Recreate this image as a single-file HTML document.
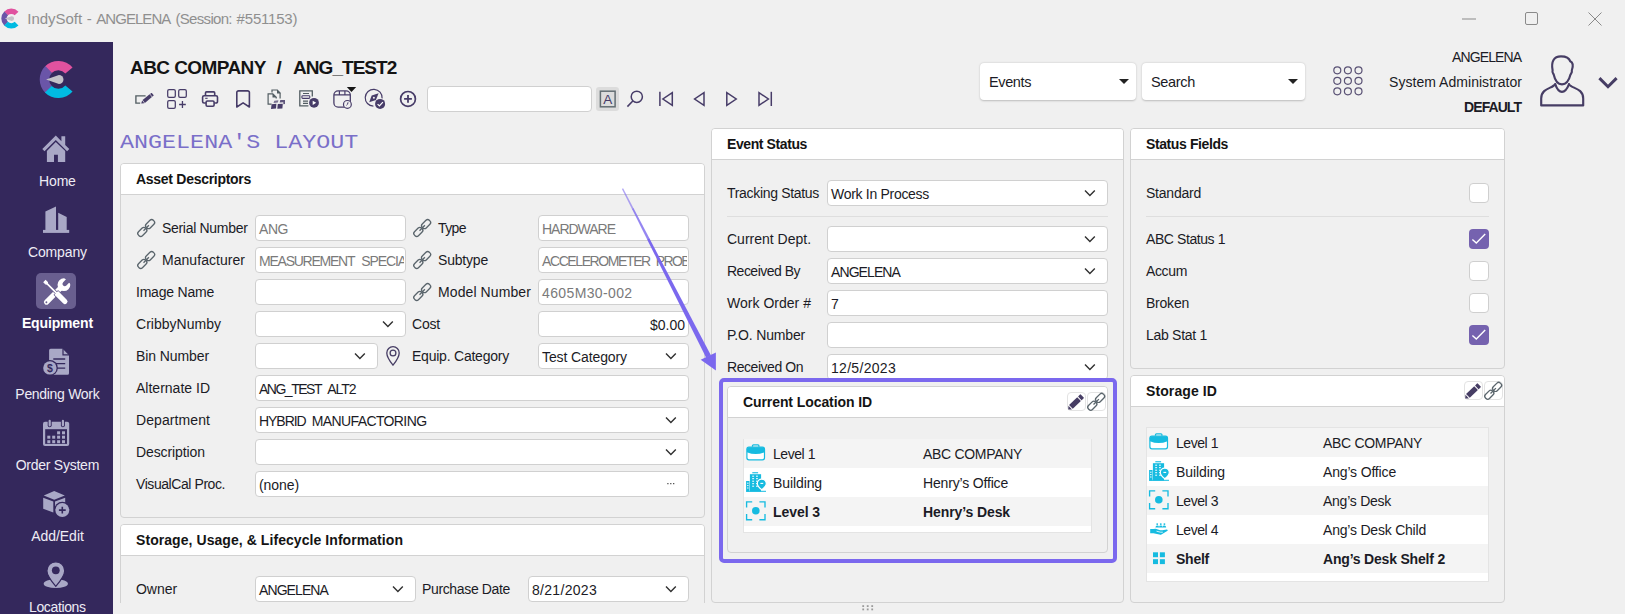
<!DOCTYPE html>
<html><head><meta charset="utf-8"><title>IndySoft</title>
<style>
html,body{margin:0;padding:0}
html{width:1625px;height:614px;overflow:hidden}
body{width:1625px;height:614px;overflow:hidden;background:#f0f0f0;position:relative;font-family:"Liberation Sans",sans-serif;font-size:14px;color:#1b1b25}
div,svg{position:absolute;box-sizing:border-box}
.t{white-space:pre;line-height:20px;height:20px}
.i{overflow:visible}
.m{font-family:"Liberation Mono",monospace}
.side{background:#34285c}
.pn{border:1px solid #d2d2d2;border-radius:4px;background:#f0f0f0}
.ph{background:#fff;border-bottom:1px solid #d2d2d2;border-radius:3px 3px 0 0}
.in{background:#fff;border:1px solid #d0d0d0;border-radius:4px}
.dd{background:#fff;border-radius:4px;box-shadow:0 0.5px 2px rgba(0,0,0,.22)}
.cb{background:#fff;border:1px solid #cfcfcf;border-radius:4px}
.cbc{background:#7562af;border-radius:4px}
.sep{background:#dedede}
.r0{background:#f4f4f4}
.r1{background:#fff}
.tb{border:1px solid #e4e4e4;background:#fff}
.sb{background:#fff;border:1px solid #e3e3e3;border-radius:4px}
</style></head><body>
<div class="t" style="left:27.30px;top:8.80px;font-size:15px;color:#8f8f8f;letter-spacing:-0.041px;">IndySoft</div>
<div class="t" style="left:86.70px;top:8.80px;font-size:15px;color:#8f8f8f;">-</div>
<div class="t" style="left:96.30px;top:8.80px;font-size:15px;color:#8f8f8f;letter-spacing:-0.962px;">ANGELENA</div>
<div class="t" style="left:175.50px;top:8.80px;font-size:15px;color:#8f8f8f;letter-spacing:-0.692px;">(Session:</div>
<div class="t" style="left:236.60px;top:8.80px;font-size:15px;color:#8f8f8f;letter-spacing:-0.196px;">#551153)</div>
<svg class="i" style="left:1462px;top:18px;" width="14" height="2" viewBox="0 0 14 2"><path d="M0 1H14" stroke="#8a8a8a" stroke-width="1"/></svg>
<svg class="i" style="left:1525px;top:12px;" width="13" height="13" viewBox="0 0 13 13"><rect x="0.5" y="0.5" width="12" height="12" rx="1.5" fill="none" stroke="#8a8a8a"/></svg>
<svg class="i" style="left:1588px;top:12px;" width="14" height="14" viewBox="0 0 14 14"><path d="M0.5 0.5L13.5 13.5M13.5 0.5L0.5 13.5" stroke="#8a8a8a" stroke-width="1"/></svg>
<div class="side" style="left:0px;top:42px;width:113px;height:572px;"></div>
<div class="t" style="left:39.11px;top:171.00px;font-size:14px;color:#eeecf5;letter-spacing:-0.186px;">Home</div>
<div class="t" style="left:27.93px;top:242.00px;font-size:14px;color:#eeecf5;letter-spacing:-0.130px;">Company</div>
<div class="t" style="left:21.93px;top:313.00px;font-size:14px;font-weight:bold;color:#ffffff;letter-spacing:-0.148px;">Equipment</div>
<div class="t" style="left:15.35px;top:384.00px;font-size:14px;color:#eeecf5;letter-spacing:-0.306px;">Pending Work</div>
<div class="t" style="left:15.68px;top:455.00px;font-size:14px;color:#eeecf5;letter-spacing:-0.246px;">Order System</div>
<div class="t" style="left:31.14px;top:526.00px;font-size:14px;color:#eeecf5;letter-spacing:-0.028px;">Add/Edit</div>
<div class="t" style="left:29.02px;top:597.00px;font-size:14px;color:#eeecf5;letter-spacing:-0.370px;height:17px;overflow:hidden;">Locations</div>
<div class="t" style="left:130.00px;top:57.80px;font-size:19px;font-weight:bold;color:#141414;letter-spacing:-0.577px;">ABC COMPANY</div>
<div class="t" style="left:276.40px;top:57.80px;font-size:19px;font-weight:bold;color:#141414;">/</div>
<div class="t" style="left:293.10px;top:57.80px;font-size:19px;font-weight:bold;color:#141414;letter-spacing:-0.968px;">ANG_TEST2</div>
<div class="in" style="left:427px;top:86px;width:165px;height:26px;"></div>
<div class="t m" style="left:120.30px;top:133.00px;font-size:20px;color:#7a6fc9;transform:scaleX(1.1683);transform-origin:0 0;">ANGELENA'S LAYOUT</div>
<div class="dd" style="left:980px;top:63px;width:156px;height:37px;"></div>
<div class="t" style="left:989.00px;top:71.50px;font-size:14.5px;letter-spacing:-0.388px;">Events</div>
<div class="dd" style="left:1142px;top:63px;width:163px;height:37px;"></div>
<div class="t" style="left:1151.00px;top:71.50px;font-size:14.5px;letter-spacing:-0.323px;">Search</div>
<svg class="i" style="left:1119px;top:79px;" width="10" height="5" viewBox="0 0 10 5"><path d="M0 0H10L5 5Z" fill="#222"/></svg>
<svg class="i" style="left:1288px;top:79px;" width="10" height="5" viewBox="0 0 10 5"><path d="M0 0H10L5 5Z" fill="#222"/></svg>
<div class="t" style="left:1452.09px;top:47.00px;font-size:14px;letter-spacing:-0.906px;">ANGELENA</div>
<div class="t" style="left:1389.04px;top:72.00px;font-size:14px;letter-spacing:0.037px;">System Administrator</div>
<div class="t" style="left:1464.07px;top:97.00px;font-size:14px;font-weight:bold;letter-spacing:-0.930px;">DEFAULT</div>
<div class="pn" style="left:120px;top:163px;width:585px;height:355px;"></div>
<div class="ph" style="left:121px;top:164px;width:583px;height:31px;"></div>
<div class="t" style="left:136.00px;top:169.00px;font-size:14px;font-weight:bold;color:#141414;letter-spacing:-0.284px;">Asset Descriptors</div>
<div class="t" style="left:162.00px;top:217.80px;font-size:14px;letter-spacing:-0.305px;">Serial Number</div>
<div class="in" style="left:255px;top:215px;width:151px;height:26px;"></div>
<div class="t" style="left:259.00px;top:218.80px;font-size:14px;color:#7a7a7a;letter-spacing:-0.446px;">ANG</div>
<div class="t" style="left:162.00px;top:249.80px;font-size:14px;letter-spacing:0.044px;">Manufacturer</div>
<div class="in" style="left:255px;top:247px;width:151px;height:26px;"></div>
<div class="t" style="left:259.00px;top:250.80px;font-size:14px;color:#7a7a7a;letter-spacing:-1.236px;">MEASUREMENT</div>
<div class="t" style="left:361.20px;top:250.80px;font-size:14px;color:#7a7a7a;letter-spacing:-1.091px;width:43.2px;overflow:hidden;">SPECIAL</div>
<div class="t" style="left:136.00px;top:281.80px;font-size:14px;letter-spacing:-0.214px;">Image Name</div>
<div class="in" style="left:255px;top:279px;width:151px;height:26px;"></div>
<div class="t" style="left:136.00px;top:313.80px;font-size:14px;letter-spacing:0.019px;">CribbyNumby</div>
<div class="in" style="left:255px;top:311px;width:151px;height:26px;"></div>
<div class="t" style="left:136.00px;top:345.80px;font-size:14px;letter-spacing:-0.091px;">Bin Number</div>
<div class="in" style="left:255px;top:343px;width:123px;height:26px;"></div>
<div class="t" style="left:136.00px;top:377.80px;font-size:14px;letter-spacing:0.007px;">Alternate ID</div>
<div class="in" style="left:255px;top:375px;width:434px;height:26px;"></div>
<div class="t" style="left:259.00px;top:378.80px;font-size:14px;letter-spacing:-1.488px;">ANG_TEST</div>
<div class="t" style="left:327.20px;top:378.80px;font-size:14px;letter-spacing:-1.005px;">ALT2</div>
<div class="t" style="left:136.00px;top:409.80px;font-size:14px;letter-spacing:0.086px;">Department</div>
<div class="in" style="left:255px;top:407px;width:434px;height:26px;"></div>
<div class="t" style="left:259.00px;top:410.80px;font-size:14px;letter-spacing:-1.050px;">HYBRID</div>
<div class="t" style="left:311.80px;top:410.80px;font-size:14px;letter-spacing:-0.618px;">MANUFACTORING</div>
<div class="t" style="left:136.00px;top:441.80px;font-size:14px;letter-spacing:-0.093px;">Description</div>
<div class="in" style="left:255px;top:439px;width:434px;height:26px;"></div>
<div class="t" style="left:136.00px;top:473.80px;font-size:14px;letter-spacing:-0.430px;">VisualCal Proc.</div>
<div class="in" style="left:255px;top:471px;width:434px;height:26px;"></div>
<div class="t" style="left:259.00px;top:474.80px;font-size:14px;letter-spacing:-0.077px;">(none)</div>
<div class="t" style="left:438.00px;top:217.80px;font-size:14px;letter-spacing:-0.587px;">Type</div>
<div class="in" style="left:538px;top:215px;width:151px;height:26px;"></div>
<div class="t" style="left:542.00px;top:218.80px;font-size:14px;color:#7a7a7a;letter-spacing:-1.019px;">HARDWARE</div>
<div class="t" style="left:438.00px;top:249.80px;font-size:14px;letter-spacing:-0.196px;">Subtype</div>
<div class="in" style="left:538px;top:247px;width:151px;height:26px;"></div>
<div class="t" style="left:542.00px;top:250.80px;font-size:14px;color:#7a7a7a;letter-spacing:-1.402px;">ACCELEROMETER</div>
<div class="t" style="left:655.80px;top:250.80px;font-size:14px;color:#7a7a7a;letter-spacing:-1.603px;width:31.4px;overflow:hidden;">PROBE</div>
<div class="t" style="left:438.00px;top:281.80px;font-size:14px;letter-spacing:0.099px;">Model Number</div>
<div class="in" style="left:538px;top:279px;width:151px;height:26px;"></div>
<div class="t" style="left:542.00px;top:282.80px;font-size:14px;color:#7a7a7a;letter-spacing:0.374px;">4605M30-002</div>
<div class="t" style="left:412.00px;top:313.80px;font-size:14px;letter-spacing:-0.196px;">Cost</div>
<div class="in" style="left:538px;top:311px;width:151px;height:26px;"></div>
<div class="t" style="left:649.99px;top:314.80px;font-size:14px;letter-spacing:-0.006px;">$0.00</div>
<div class="t" style="left:412.00px;top:345.80px;font-size:14px;letter-spacing:-0.226px;">Equip. Category</div>
<div class="in" style="left:538px;top:343px;width:151px;height:26px;"></div>
<div class="t" style="left:542.00px;top:346.80px;font-size:14px;letter-spacing:-0.105px;">Test Category</div>
<div class="pn" style="left:120px;top:524px;width:585px;height:86px;"></div>
<div class="ph" style="left:121px;top:525px;width:583px;height:31px;"></div>
<div class="t" style="left:136.00px;top:530.00px;font-size:14px;font-weight:bold;color:#141414;letter-spacing:0.064px;">Storage, Usage, &amp; Lifecycle Information</div>
<div class="t" style="left:136.00px;top:578.80px;font-size:14px;letter-spacing:-0.046px;">Owner</div>
<div class="in" style="left:255px;top:576px;width:161px;height:26px;"></div>
<div class="t" style="left:259.00px;top:579.80px;font-size:14px;letter-spacing:-0.906px;">ANGELENA</div>
<div class="t" style="left:422.00px;top:578.80px;font-size:14px;letter-spacing:-0.354px;">Purchase Date</div>
<div class="in" style="left:528px;top:576px;width:161px;height:26px;"></div>
<div class="t" style="left:532.00px;top:579.80px;font-size:14px;letter-spacing:0.303px;">8/21/2023</div>
<div class="" style="left:113px;top:603px;width:598px;height:11px;background:#f0f0f0"></div>
<div class="pn" style="left:711px;top:128px;width:413px;height:475px;"></div>
<div class="ph" style="left:712px;top:129px;width:411px;height:31px;"></div>
<div class="t" style="left:727.00px;top:134.00px;font-size:14px;font-weight:bold;color:#141414;letter-spacing:-0.400px;">Event Status</div>
<div class="t" style="left:727.00px;top:182.80px;font-size:14px;letter-spacing:-0.316px;">Tracking Status</div>
<div class="in" style="left:827px;top:180px;width:281px;height:26px;"></div>
<div class="t" style="left:831.00px;top:183.80px;font-size:14px;letter-spacing:-0.295px;">Work In Process</div>
<div class="sep" style="left:727px;top:216px;width:381px;height:1px;"></div>
<div class="t" style="left:727.00px;top:228.80px;font-size:14px;">Current Dept.</div>
<div class="in" style="left:827px;top:226px;width:281px;height:26px;"></div>
<div class="t" style="left:727.00px;top:260.80px;font-size:14px;letter-spacing:-0.508px;">Received By</div>
<div class="in" style="left:827px;top:258px;width:281px;height:26px;"></div>
<div class="t" style="left:831.00px;top:261.80px;font-size:14px;letter-spacing:-0.906px;">ANGELENA</div>
<div class="t" style="left:727.00px;top:292.80px;font-size:14px;letter-spacing:0.020px;">Work Order #</div>
<div class="in" style="left:827px;top:290px;width:281px;height:26px;"></div>
<div class="t" style="left:831.00px;top:293.80px;font-size:14px;letter-spacing:0.215px;">7</div>
<div class="t" style="left:727.00px;top:324.80px;font-size:14px;letter-spacing:-0.171px;">P.O. Number</div>
<div class="in" style="left:827px;top:322px;width:281px;height:26px;"></div>
<div class="t" style="left:727.00px;top:356.80px;font-size:14px;letter-spacing:-0.448px;">Received On</div>
<div class="in" style="left:827px;top:354px;width:281px;height:26px;"></div>
<div class="t" style="left:831.00px;top:357.80px;font-size:14px;letter-spacing:0.303px;">12/5/2023</div>
<div class="" style="left:719px;top:378px;width:398px;height:185px;border:4px solid #7b68ee;border-radius:5px;background:#f0f0f0"></div>
<div class="pn" style="left:727px;top:386px;width:381px;height:167px;"></div>
<div class="ph" style="left:728px;top:387px;width:379px;height:31px;"></div>
<div class="t" style="left:743.00px;top:392.00px;font-size:14px;font-weight:bold;color:#141414;letter-spacing:-0.087px;">Current Location ID</div>
<div class="sb" style="left:1067px;top:392px;width:19px;height:19px;"></div>
<div class="sb" style="left:1087px;top:392px;width:19px;height:19px;"></div>
<div class="tb" style="left:743px;top:439px;width:349px;height:94px;"></div>
<div class="r0" style="left:744px;top:439px;width:347px;height:29px;"></div>
<div class="t" style="left:773.00px;top:443.50px;font-size:14px;letter-spacing:-0.449px;">Level 1</div>
<div class="t" style="left:923.00px;top:443.50px;font-size:14px;letter-spacing:-0.311px;">ABC COMPANY</div>
<div class="r1" style="left:744px;top:468px;width:347px;height:29px;"></div>
<div class="t" style="left:773.00px;top:472.50px;font-size:14px;letter-spacing:-0.101px;">Building</div>
<div class="t" style="left:923.00px;top:472.50px;font-size:14px;letter-spacing:-0.171px;">Henry’s Office</div>
<div class="r0" style="left:744px;top:497px;width:347px;height:29px;"></div>
<div class="t" style="left:773.00px;top:501.50px;font-size:14px;font-weight:bold;letter-spacing:-0.067px;">Level 3</div>
<div class="t" style="left:923.00px;top:501.50px;font-size:14px;font-weight:bold;letter-spacing:-0.099px;">Henry’s Desk</div>
<div class="pn" style="left:1130px;top:128px;width:375px;height:241px;"></div>
<div class="ph" style="left:1131px;top:129px;width:373px;height:31px;"></div>
<div class="t" style="left:1146.00px;top:134.00px;font-size:14px;font-weight:bold;color:#141414;letter-spacing:-0.394px;">Status Fields</div>
<div class="t" style="left:1146.00px;top:182.80px;font-size:14px;letter-spacing:-0.227px;">Standard</div>
<div class="cb" style="left:1469px;top:183px;width:20px;height:20px;"></div>
<div class="sep" style="left:1146px;top:216px;width:343px;height:1px;"></div>
<div class="t" style="left:1146.00px;top:228.80px;font-size:14px;letter-spacing:-0.420px;">ABC Status 1</div>
<div class="cbc" style="left:1469px;top:229px;width:20px;height:20px;"></div>
<svg class="i" style="left:1469px;top:229px;" width="20" height="20" viewBox="0 0 20 20"><path d="M3.4 10.4L7.3 14.1L16.2 5" fill="none" stroke="#fff" stroke-width="1.4"/></svg>
<div class="t" style="left:1146.00px;top:260.80px;font-size:14px;letter-spacing:-0.357px;">Accum</div>
<div class="cb" style="left:1469px;top:261px;width:20px;height:20px;"></div>
<div class="t" style="left:1146.00px;top:292.80px;font-size:14px;letter-spacing:-0.226px;">Broken</div>
<div class="cb" style="left:1469px;top:293px;width:20px;height:20px;"></div>
<div class="t" style="left:1146.00px;top:324.80px;font-size:14px;letter-spacing:-0.282px;">Lab Stat 1</div>
<div class="cbc" style="left:1469px;top:325px;width:20px;height:20px;"></div>
<svg class="i" style="left:1469px;top:325px;" width="20" height="20" viewBox="0 0 20 20"><path d="M3.4 10.4L7.3 14.1L16.2 5" fill="none" stroke="#fff" stroke-width="1.4"/></svg>
<div class="pn" style="left:1130px;top:375px;width:375px;height:228px;"></div>
<div class="ph" style="left:1131px;top:376px;width:373px;height:31px;"></div>
<div class="t" style="left:1146.00px;top:381.00px;font-size:14px;font-weight:bold;color:#141414;letter-spacing:0.099px;">Storage ID</div>
<div class="sb" style="left:1464px;top:381px;width:19px;height:19px;"></div>
<div class="sb" style="left:1484px;top:381px;width:19px;height:19px;"></div>
<div class="tb" style="left:1146px;top:427px;width:343px;height:155px;"></div>
<div class="r0" style="left:1147px;top:428px;width:341px;height:29px;"></div>
<div class="t" style="left:1176.00px;top:432.50px;font-size:14px;letter-spacing:-0.449px;">Level 1</div>
<div class="t" style="left:1323.00px;top:432.50px;font-size:14px;letter-spacing:-0.311px;">ABC COMPANY</div>
<div class="r1" style="left:1147px;top:457px;width:341px;height:29px;"></div>
<div class="t" style="left:1176.00px;top:461.50px;font-size:14px;letter-spacing:-0.101px;">Building</div>
<div class="t" style="left:1323.00px;top:461.50px;font-size:14px;letter-spacing:-0.164px;">Ang’s Office</div>
<div class="r0" style="left:1147px;top:486px;width:341px;height:29px;"></div>
<div class="t" style="left:1176.00px;top:490.50px;font-size:14px;letter-spacing:-0.449px;">Level 3</div>
<div class="t" style="left:1323.00px;top:490.50px;font-size:14px;letter-spacing:-0.255px;">Ang’s Desk</div>
<div class="r1" style="left:1147px;top:515px;width:341px;height:29px;"></div>
<div class="t" style="left:1176.00px;top:519.50px;font-size:14px;letter-spacing:-0.449px;">Level 4</div>
<div class="t" style="left:1323.00px;top:519.50px;font-size:14px;letter-spacing:-0.209px;">Ang’s Desk Child</div>
<div class="r0" style="left:1147px;top:544px;width:341px;height:29px;"></div>
<div class="t" style="left:1176.00px;top:548.50px;font-size:14px;font-weight:bold;letter-spacing:-0.245px;">Shelf</div>
<div class="t" style="left:1323.00px;top:548.50px;font-size:14px;font-weight:bold;letter-spacing:-0.195px;">Ang’s Desk Shelf 2</div>
<svg class="i" style="left:0;top:0" width="120" height="110"><path d="M72.55 67.54A18.6 18.6 0 0 0 44.92 66.58L51.68 73.11A9.2 9.2 0 0 1 65.35 73.59Z" fill="#e0529f"/><path d="M45.38 66.12A18.6 18.6 0 0 0 45.38 92.88L51.91 86.12A9.2 9.2 0 0 1 51.91 72.88Z" fill="#6a55a8"/><path d="M44.92 92.42A18.6 18.6 0 0 0 72.55 91.46L65.35 85.41A9.2 9.2 0 0 1 51.68 85.89Z" fill="#00bbe2"/><path d="M46.10 79.50L58.90 74.90A4.60 4.60 0 1 1 58.90 84.10Z" fill="#c3c2c8"/></svg>
<svg class="i" style="left:0;top:0" width="30" height="40"><path d="M18.49 11.65A10 10 0 0 0 4.11 11.65L7.92 15.34A4.7 4.7 0 0 1 14.68 15.34Z" fill="#e0529f"/><path d="M4.35 11.41A10 10 0 0 0 4.35 25.79L8.04 21.98A4.7 4.7 0 0 1 8.04 15.22Z" fill="#6a55a8"/><path d="M4.11 25.55A10 10 0 0 0 18.49 25.55L14.68 21.86A4.7 4.7 0 0 1 7.92 21.86Z" fill="#00bbe2"/><path d="M4.74 18.60L11.62 16.13A2.47 2.47 0 1 1 11.62 21.07Z" fill="#c3c2c8"/></svg>
<svg class="i" style="left:30px;top:125px;" width="55" height="45" viewBox="0 0 55 45"><g fill="#a9a8c6">
<path d="M25.8 10.6L12.3 24.1L14.5 26.3L25.8 15L37.1 26.3L39.3 24.1L35.2 20V11.2H31.4V16.2Z"/>
<path d="M25.8 17L16.9 25.9V37H24V29.7H27.9V37H35.2V25.9Z"/></g></svg>
<svg class="i" style="left:30px;top:200px;" width="55" height="45" viewBox="0 0 55 45"><g fill="#a9a8c6">
<path d="M15.4 11.4L26 6.5V30H15.4Z"/><path d="M28.2 12.8L36.7 17V30H28.2Z"/><rect x="13" y="29.9" width="26.2" height="3"/></g></svg>
<div class="" style="left:36px;top:273px;width:40px;height:36px;background:#695f8f;border-radius:5px"></div>
<svg class="i" style="left:30px;top:268px;" width="55" height="45" viewBox="0 0 55 45"><g transform="rotate(45 26 24.6)">
<circle cx="26" cy="13.4" r="6.4" fill="#fff"/>
<rect x="23.4" y="13.4" width="5.2" height="27.2" rx="2.6" fill="#fff"/>
<path d="M23.7 5V12.2A2.3 2.3 0 0 0 28.3 12.2V5Z" fill="#695f8f"/>
<rect x="18" y="5" width="16" height="3.3" fill="#695f8f"/>
<circle cx="26" cy="38.2" r="0.95" fill="#695f8f"/>
</g>
<g transform="rotate(-45 26 24.6)">
<path d="M24.3 8.2H27.7V11.4L26.85 12.6V25H28.6V37.2A2.6 2.6 0 0 1 23.4 37.2V25H25.15V12.6L24.3 11.4Z" fill="#fff" stroke="#695f8f" stroke-width="1.5" stroke-linejoin="round"/>
<path d="M24.3 8.2H27.7V11.4L26.85 12.6V25H28.6V37.2A2.6 2.6 0 0 1 23.4 37.2V25H25.15V12.6L24.3 11.4Z" fill="#fff"/>
</g></svg>
<svg class="i" style="left:30px;top:340px;" width="55" height="45" viewBox="0 0 55 45"><g fill="#a9a8c6">
<path d="M20.6 8.8H32.6L39 15.2V33.3A1.5 1.5 0 0 1 37.5 34.8H20.6A1.5 1.5 0 0 1 19.1 33.3V10.3A1.5 1.5 0 0 1 20.6 8.8Z"/></g>
<path d="M33 8.6V14.8H39.2" fill="none" stroke="#34285c" stroke-width="1.2"/>
<path d="M23.3 19H35.2M25 23.6H35.2M27 28.2H35.2" stroke="#34285c" stroke-width="1.3"/>
<circle cx="19.9" cy="27.9" r="7.9" fill="#34285c"/>
<circle cx="19.9" cy="27.9" r="6.7" fill="#a9a8c6"/>
<text x="19.9" y="31.6" font-family="Liberation Sans" font-weight="bold" font-size="10.5" text-anchor="middle" fill="#34285c">$</text></svg>
<svg class="i" style="left:30px;top:410px;" width="55" height="45" viewBox="0 0 55 45"><rect x="13" y="11.7" width="26.2" height="24.4" rx="2" fill="#a9a8c6"/>
<rect x="15.2" y="19.2" width="21.8" height="14.7" fill="#34285c"/><rect x="27.1" y="21.3" width="3" height="3" fill="#a9a8c6"/><rect x="32.0" y="21.3" width="3" height="3" fill="#a9a8c6"/><rect x="17.3" y="25.7" width="3" height="3" fill="#a9a8c6"/><rect x="22.2" y="25.7" width="3" height="3" fill="#a9a8c6"/><rect x="27.1" y="25.7" width="3" height="3" fill="#a9a8c6"/><rect x="32.0" y="25.7" width="3" height="3" fill="#a9a8c6"/><rect x="17.3" y="30.2" width="3" height="3" fill="#a9a8c6"/><rect x="22.2" y="30.2" width="3" height="3" fill="#a9a8c6"/><rect x="27.1" y="30.2" width="3" height="3" fill="#a9a8c6"/><rect x="32.0" y="30.2" width="3" height="3" fill="#a9a8c6"/>
<rect x="17.7" y="9.2" width="4" height="8" rx="2" fill="#34285c"/><rect x="30.9" y="9.2" width="4" height="8" rx="2" fill="#34285c"/>
<rect x="18.6" y="9.8" width="2.2" height="6.6" rx="1.1" fill="#a9a8c6"/><rect x="31.8" y="9.8" width="2.2" height="6.6" rx="1.1" fill="#a9a8c6"/></svg>
<svg class="i" style="left:30px;top:482px;" width="55" height="45" viewBox="0 0 55 45"><g fill="#a9a8c6">
<path d="M13.8 13.4L24.2 9L34.8 13.4L24.2 17.8Z"/>
<path d="M13.2 15.8L23.3 19.5V30.4L13.2 26.8Z"/>
<path d="M25 19.5L35.2 15.8V27H25Z"/></g>
<circle cx="32.3" cy="28.1" r="8.3" fill="#34285c"/>
<circle cx="32.3" cy="28.1" r="7" fill="#a9a8c6"/>
<path d="M28.9 28.1H35.7M32.3 24.7V31.5" stroke="#34285c" stroke-width="1.6"/></svg>
<svg class="i" style="left:30px;top:554px;" width="55" height="45" viewBox="0 0 55 45"><ellipse cx="25.8" cy="29.7" rx="12.1" ry="4.4" fill="#a9a8c6"/>
<path d="M25.8 32.3C25.8 32.3 16.9 22 16.9 16.7A8.9 8.9 0 0 1 34.7 16.7C34.7 22 25.8 32.3 25.8 32.3Z" fill="#a9a8c6" stroke="#34285c" stroke-width="1.2"/>
<circle cx="25.8" cy="16.3" r="3.9" fill="#34285c"/></svg>
<svg class="i" style="left:0;top:0" width="1625" height="614" viewBox="0 0 1625 614"><path d="M145.6 95.9H135.9V103.1H140.2" fill="none" stroke="#525d62" stroke-width="1.35"/><g transform="translate(141.2 103.6) rotate(-39.5)" fill="#473c68">
<path d="M0 0L2.7 -1.8V1.8Z"/><rect x="3.3" y="-1.8" width="9.1" height="3.6"/><rect x="13" y="-1.8" width="2" height="3.6" rx="0.6"/></g><rect x="167.7" y="89.7" width="7.6" height="7.6" rx="1.4" fill="none" stroke="#473c68" stroke-width="1.25"/><rect x="178.7" y="89.7" width="7.6" height="7.6" rx="1.4" fill="none" stroke="#473c68" stroke-width="1.25"/><rect x="167.7" y="100.7" width="7.6" height="7.6" rx="1.4" fill="none" stroke="#473c68" stroke-width="1.25"/><path d="M179.1 104.5H185.8M182.45 101.1V107.9" stroke="#473c68" stroke-width="1.3" fill="none"/><g fill="none" stroke="#473c68" stroke-width="1.6" stroke-linejoin="round">
<path d="M205.5 95.6V92.9A1 1 0 0 1 206.5 91.9H213.7A1 1 0 0 1 214.7 92.9V95.6"/>
<path d="M205.9 103H204.1A1.5 1.5 0 0 1 202.6 101.5V97.3A1.5 1.5 0 0 1 204.1 95.8H216A1.5 1.5 0 0 1 217.5 97.3V101.5A1.5 1.5 0 0 1 216 103H214.3"/>
<rect x="206.1" y="101" width="8" height="5.2" rx="1.2"/>
</g><path d="M205.2 98.3H207.6" stroke="#473c68" stroke-width="1.1"/><path d="M236.8 107V92.6A1.7 1.7 0 0 1 238.5 90.9H247.7A1.7 1.7 0 0 1 249.4 92.6V107L243.1 102.9Z" fill="none" stroke="#473c68" stroke-width="1.6" stroke-linejoin="round"/><g fill="none" stroke="#525d62" stroke-width="1.2">
<path d="M272 92.6V90H277.2L280.1 93V98.6"/>
<path d="M271.6 104.1H268.1V93.8H272.8L276.2 97.2V98.6"/></g>
<path d="M277 89.6L280.6 93.3V93.4H277Z" fill="#525d62"/><path d="M272.5 93.4L276.7 97.6H272.5Z" fill="#525d62"/>
<g fill="#473c68">
<path d="M274.3 100.7L278.4 100.2L277.9 102.6L273.5 103.1Z" opacity=".7"/>
<path d="M280.3 100.1L285 99.9L285 103.9L283.3 104.2L283.3 102.2L279.7 102.5Z" opacity=".85"/>
<path d="M271.6 104.2L276.4 103.8L276 108.4L271 108.9Z"/>
<path d="M277.8 103.9L282.8 103.7L282.4 108.4L277.3 108.8Z"/></g><path d="M312.3 96.5V90.8H299.8V105.8H308.4" fill="none" stroke="#525d62" stroke-width="1.3"/>
<path d="M303 93.5H309M303 101.1H308M303 103.4H308" stroke="#525d62" stroke-width="1.1"/>
<rect x="301.9" y="95.7" width="7.9" height="2.7" rx="0.9" fill="none" stroke="#473c68" stroke-width="1.1"/>
<circle cx="314" cy="102.8" r="4.9" fill="#473c68"/><path d="M312.7 100.7L316.2 102.8L312.7 104.9Z" fill="#fff"/><rect x="333.9" y="90.9" width="16.4" height="16.2" rx="4.2" fill="none" stroke="#473c68" stroke-width="1.3"/>
<path d="M334 94.9H350.2M339.4 91V94.9M344.9 91V94.9" stroke="#473c68" stroke-width="1.2" fill="none"/>
<circle cx="347.4" cy="104.4" r="3.9" fill="#f0f0f0" stroke="#473c68" stroke-width="1.2"/>
<path d="M348 102.3Q348 104.6 346.4 105.3" stroke="#473c68" stroke-width="1" fill="none"/>
<path d="M346.8 87H356.2L351.5 92Z" fill="#161616"/><path d="M382.1 98.4A8.45 8.45 0 1 0 373.4 106.2" fill="none" stroke="#473c68" stroke-width="1.2"/>
<path d="M378.6 93.2L375.9 100.1L369.2 102.3L371.7 95.6Z" fill="#473c68"/><circle cx="373.9" cy="97.8" r="1" fill="#f0f0f0"/>
<circle cx="380.1" cy="103.9" r="5" fill="#473c68"/><path d="M377.6 104.1L379.4 105.9L382.9 102.1" stroke="#fff" stroke-width="1.2" fill="none"/><circle cx="408" cy="98.9" r="7.4" fill="none" stroke="#473c68" stroke-width="1.7"/><path d="M404.1 98.9H411.9M408 95V102.8" stroke="#473c68" stroke-width="1.8"/><rect x="596" y="87" width="23" height="24" rx="3" fill="#dcdcdc"/>
<rect x="600.4" y="91.2" width="14.7" height="15.6" fill="none" stroke="#636e73" stroke-width="1.5"/><circle cx="636.8" cy="96.8" r="5.6" fill="none" stroke="#473c68" stroke-width="1.5"/><path d="M632.8 101L627.4 106.6" stroke="#473c68" stroke-width="1.6"/><g fill="none" stroke="#473c68" stroke-width="1.5" stroke-linejoin="miter">
<path d="M659.9 91.8V106"/><path d="M672.3 92.7V105.3L662.9 99Z"/>
<path d="M704 92.7V105.3L694.6 99Z"/>
<path d="M726.8 92.7V105.3L736.2 99Z"/>
<path d="M759 92.7V105.3L768.4 99Z"/><path d="M771.3 91.8V106"/></g></svg>
<div class="t" style="left:603.30px;top:89.80px;font-size:13.5px;color:#473c68;">A</div>
<svg class="i" style="left:0;top:0" width="1625" height="614" viewBox="0 0 1625 614"><circle cx="1337.3" cy="70.3" r="3.5" fill="none" stroke="#5a5275" stroke-width="1.2"/><circle cx="1347.9" cy="70.3" r="3.5" fill="none" stroke="#5a5275" stroke-width="1.2"/><circle cx="1358.5" cy="70.3" r="3.5" fill="none" stroke="#5a5275" stroke-width="1.2"/><circle cx="1337.3" cy="80.8" r="3.5" fill="none" stroke="#5a5275" stroke-width="1.2"/><circle cx="1347.9" cy="80.8" r="3.5" fill="none" stroke="#5a5275" stroke-width="1.2"/><circle cx="1358.5" cy="80.8" r="3.5" fill="none" stroke="#5a5275" stroke-width="1.2"/><circle cx="1337.3" cy="91.3" r="3.5" fill="none" stroke="#5a5275" stroke-width="1.2"/><circle cx="1347.9" cy="91.3" r="3.5" fill="none" stroke="#5a5275" stroke-width="1.2"/><circle cx="1358.5" cy="91.3" r="3.5" fill="none" stroke="#5a5275" stroke-width="1.2"/><g fill="none" stroke="#463d64" stroke-width="2.15" stroke-linejoin="round" stroke-linecap="round">
<path d="M1552.6 70.3C1551 62 1553.5 56.3 1561 56.3C1566.5 56.3 1569.5 58.8 1570.3 61.3C1573.2 62.6 1573 67 1571.8 70.5C1572.4 72.5 1571 73.3 1570.5 74.5C1569 80.5 1566 84.3 1562 84.3C1558 84.3 1555 80.5 1553.7 74.5C1553.1 73.3 1551.9 72.5 1552.6 70.3Z"/>
<path d="M1555.2 84C1553.5 88.5 1541.2 87.5 1541.2 98.5V105.4H1583.2V98.5C1583.2 87.5 1570.5 88.5 1569 84"/>
<path d="M1555.4 84.6C1557 89.3 1559.8 91.8 1562 91.8C1564.2 91.8 1567 89.3 1568.8 84.6"/></g><path d="M1599.4 78.1L1608 86.7L1616.6 78.1" fill="none" stroke="#463d64" stroke-width="3" stroke-linejoin="miter"/><path d="M383.0 321.5L387.9 326.5L392.8 321.5" fill="none" stroke="#303030" stroke-width="1.4"/><path d="M355.0 353.5L359.9 358.5L364.8 353.5" fill="none" stroke="#303030" stroke-width="1.4"/><path d="M666.0 353.5L670.9 358.5L675.8 353.5" fill="none" stroke="#303030" stroke-width="1.4"/><path d="M666.0 417.5L670.9 422.5L675.8 417.5" fill="none" stroke="#303030" stroke-width="1.4"/><path d="M666.0 449.5L670.9 454.5L675.8 449.5" fill="none" stroke="#303030" stroke-width="1.4"/><path d="M1085.0 190.5L1089.9 195.5L1094.8 190.5" fill="none" stroke="#303030" stroke-width="1.4"/><path d="M1085.0 236.5L1089.9 241.5L1094.8 236.5" fill="none" stroke="#303030" stroke-width="1.4"/><path d="M1085.0 268.5L1089.9 273.5L1094.8 268.5" fill="none" stroke="#303030" stroke-width="1.4"/><path d="M1085.0 364.5L1089.9 369.5L1094.8 364.5" fill="none" stroke="#303030" stroke-width="1.4"/><path d="M393.0 586.5L397.9 591.5L402.8 586.5" fill="none" stroke="#303030" stroke-width="1.4"/><path d="M666.0 586.5L670.9 591.5L675.8 586.5" fill="none" stroke="#303030" stroke-width="1.4"/><g transform="translate(146.2 228) rotate(-45)" fill="none" stroke="#5a656c" stroke-width="1.3">
<rect x="0.5" y="-2.8" width="10" height="5.6" rx="2.4"/><rect x="-10.5" y="-2.8" width="10" height="5.6" rx="2.4"/><path d="M-3.8 0H3.8"/></g><g transform="translate(146.2 260) rotate(-45)" fill="none" stroke="#5a656c" stroke-width="1.3">
<rect x="0.5" y="-2.8" width="10" height="5.6" rx="2.4"/><rect x="-10.5" y="-2.8" width="10" height="5.6" rx="2.4"/><path d="M-3.8 0H3.8"/></g><g transform="translate(422.2 228) rotate(-45)" fill="none" stroke="#5a656c" stroke-width="1.3">
<rect x="0.5" y="-2.8" width="10" height="5.6" rx="2.4"/><rect x="-10.5" y="-2.8" width="10" height="5.6" rx="2.4"/><path d="M-3.8 0H3.8"/></g><g transform="translate(422.2 260) rotate(-45)" fill="none" stroke="#5a656c" stroke-width="1.3">
<rect x="0.5" y="-2.8" width="10" height="5.6" rx="2.4"/><rect x="-10.5" y="-2.8" width="10" height="5.6" rx="2.4"/><path d="M-3.8 0H3.8"/></g><g transform="translate(422.2 292) rotate(-45)" fill="none" stroke="#5a656c" stroke-width="1.3">
<rect x="0.5" y="-2.8" width="10" height="5.6" rx="2.4"/><rect x="-10.5" y="-2.8" width="10" height="5.6" rx="2.4"/><path d="M-3.8 0H3.8"/></g><path d="M393 365.2C393 365.2 386.8 357.3 386.8 352.9A6.2 6.2 0 0 1 399.2 352.9C399.2 357.3 393 365.2 393 365.2Z" fill="none" stroke="#463d64" stroke-width="1.3" stroke-linejoin="round"/>
<circle cx="393" cy="353" r="2.9" fill="none" stroke="#463d64" stroke-width="1.3"/><path d="M667.3 483.7h1.2M670.2 483.7h1.2M673.1 483.7h1.2" stroke="#444" stroke-width="1.2"/><rect x="862.3" y="605.2" width="1.8" height="1.8" fill="#9a9a9a"/><rect x="866.8" y="605.2" width="1.8" height="1.8" fill="#9a9a9a"/><rect x="871.3" y="605.2" width="1.8" height="1.8" fill="#9a9a9a"/><rect x="862.3" y="608.5" width="1.8" height="1.8" fill="#9a9a9a"/><rect x="866.8" y="608.5" width="1.8" height="1.8" fill="#9a9a9a"/><rect x="871.3" y="608.5" width="1.8" height="1.8" fill="#9a9a9a"/><g transform="translate(1068.1999999999998 409.6) rotate(-44)" fill="#463d64">
<path d="M0 0L2.8 -2.5V2.5Z"/><rect x="3.8" y="-2.65" width="11.3" height="5.3"/><rect x="16.1" y="-2.65" width="3.4" height="5.3" rx="0.5"/></g><g transform="translate(1096.2 401.8) rotate(-45)" fill="none" stroke="#5a656c" stroke-width="1.3">
<rect x="0.5" y="-2.8" width="10" height="5.6" rx="2.4"/><rect x="-10.5" y="-2.8" width="10" height="5.6" rx="2.4"/><path d="M-3.8 0H3.8"/></g><g transform="translate(1465.1999999999998 398.6) rotate(-44)" fill="#463d64">
<path d="M0 0L2.8 -2.5V2.5Z"/><rect x="3.8" y="-2.65" width="11.3" height="5.3"/><rect x="16.1" y="-2.65" width="3.4" height="5.3" rx="0.5"/></g><g transform="translate(1493.2 390.8) rotate(-45)" fill="none" stroke="#5a656c" stroke-width="1.3">
<rect x="0.5" y="-2.8" width="10" height="5.6" rx="2.4"/><rect x="-10.5" y="-2.8" width="10" height="5.6" rx="2.4"/><path d="M-3.8 0H3.8"/></g><path d="M752.5 446.79999999999995V445.79999999999995A0.9 0.9 0 0 1 753.4 444.9H758.0A0.9 0.9 0 0 1 758.9 445.79999999999995V446.79999999999995" fill="none" stroke="#16bbe0" stroke-width="1.3"/>
<rect x="746.9" y="447.2" width="17.6" height="12.6" rx="2" fill="#fff" stroke="#16bbe0" stroke-width="1.2"/>
<path d="M746.9 449.2A2 2 0 0 1 748.9 447.2H762.5A2 2 0 0 1 764.5 449.2V452.2Q755.6999999999999 456.0 746.9 452.2Z" fill="#16bbe0"/><g fill="#16bbe0"><rect x="752.3000000000001" y="472.2" width="5.8" height="1.1"/>
<rect x="749.9" y="474.2" width="11.2" height="17.4"/><rect x="746.1" y="481.0" width="3.4" height="10.6"/>
<rect x="746.1" y="490.8" width="19.9" height="1"/></g><path d="M752.2 476.2h1.9M756.0 476.2h1.9" stroke="#fff" stroke-width="1"/><path d="M752.2 478.7h1.9M756.0 478.7h1.9" stroke="#fff" stroke-width="1"/><path d="M752.2 481.2h1.9M756.0 481.2h1.9" stroke="#fff" stroke-width="1"/><path d="M752.2 483.7h1.9M756.0 483.7h1.9" stroke="#fff" stroke-width="1"/><path d="M752.2 486.2h1.9M756.0 486.2h1.9" stroke="#fff" stroke-width="1"/>
<path d="M747.0 483.2h1.6M747.0 485.59999999999997h1.6M747.0 488.0h1.6" stroke="#fff" stroke-width="0.9"/>
<path d="M761.8000000000001 489.8C761.8000000000001 489.8 757.3000000000001 486.4 757.3000000000001 483.59999999999997A4.5 4.5 0 0 1 766.3000000000001 483.59999999999997C766.3000000000001 486.4 761.8000000000001 489.8 761.8000000000001 489.8Z" fill="#16bbe0" stroke="#fff" stroke-width="1.2"/>
<path d="M760.4 483.4h2.8" stroke="#fff" stroke-width="1.1"/><g fill="none" stroke="#16bbe0" stroke-width="1.35">
<path d="M752.2 501.9H746.6V507.5M759.4 501.9H765.0V507.5M752.2 519.6999999999999H746.6V514.0999999999999M759.4 519.6999999999999H765.0V514.0999999999999"/></g>
<circle cx="755.8000000000001" cy="510.69999999999993" r="3.8" fill="#16bbe0"/><path d="M1155.5 435.79999999999995V434.79999999999995A0.9 0.9 0 0 1 1156.3999999999999 433.9H1161.0A0.9 0.9 0 0 1 1161.8999999999999 434.79999999999995V435.79999999999995" fill="none" stroke="#16bbe0" stroke-width="1.3"/>
<rect x="1149.8999999999999" y="436.2" width="17.6" height="12.6" rx="2" fill="#fff" stroke="#16bbe0" stroke-width="1.2"/>
<path d="M1149.8999999999999 438.2A2 2 0 0 1 1151.8999999999999 436.2H1165.5A2 2 0 0 1 1167.5 438.2V441.2Q1158.7 445.0 1149.8999999999999 441.2Z" fill="#16bbe0"/><g fill="#16bbe0"><rect x="1155.3" y="461.2" width="5.8" height="1.1"/>
<rect x="1152.8999999999999" y="463.2" width="11.2" height="17.4"/><rect x="1149.1" y="470.0" width="3.4" height="10.6"/>
<rect x="1149.1" y="479.8" width="19.9" height="1"/></g><path d="M1155.1999999999998 465.2h1.9M1159.0 465.2h1.9" stroke="#fff" stroke-width="1"/><path d="M1155.1999999999998 467.7h1.9M1159.0 467.7h1.9" stroke="#fff" stroke-width="1"/><path d="M1155.1999999999998 470.2h1.9M1159.0 470.2h1.9" stroke="#fff" stroke-width="1"/><path d="M1155.1999999999998 472.7h1.9M1159.0 472.7h1.9" stroke="#fff" stroke-width="1"/><path d="M1155.1999999999998 475.2h1.9M1159.0 475.2h1.9" stroke="#fff" stroke-width="1"/>
<path d="M1150.0 472.2h1.6M1150.0 474.59999999999997h1.6M1150.0 477.0h1.6" stroke="#fff" stroke-width="0.9"/>
<path d="M1164.8 478.8C1164.8 478.8 1160.3 475.4 1160.3 472.59999999999997A4.5 4.5 0 0 1 1169.3 472.59999999999997C1169.3 475.4 1164.8 478.8 1164.8 478.8Z" fill="#16bbe0" stroke="#fff" stroke-width="1.2"/>
<path d="M1163.3999999999999 472.4h2.8" stroke="#fff" stroke-width="1.1"/><g fill="none" stroke="#16bbe0" stroke-width="1.35">
<path d="M1155.1999999999998 490.9H1149.6V496.5M1162.4 490.9H1168.0V496.5M1155.1999999999998 508.7H1149.6V503.09999999999997M1162.4 508.7H1168.0V503.09999999999997"/></g>
<circle cx="1158.8" cy="499.69999999999993" r="3.8" fill="#16bbe0"/><g fill="#16bbe0">
<circle cx="1157.2" cy="524.1" r="0.95"/><circle cx="1160.8" cy="524.1" r="0.95"/><circle cx="1164.4" cy="524.1" r="0.95"/>
<path d="M1155.4 527.5Q1155.6000000000001 525.5 1157.2 525.5Q1158.9 525.5 1159.0 526.9Q1159.2 525.5 1160.8 525.5Q1162.5 525.5 1162.6000000000001 526.9Q1162.8 525.5 1164.4 525.5Q1166.0 525.5 1166.2 527.5Z"/>
<path d="M1150.2 528.9H1153.2L1155.7 528.6999999999999L1160.2 530.3H1162.4L1166.8 529.6Q1168.2 529.8 1167.6000000000001 530.8L1161.4 534.5Q1160.5 534.9 1159.4 534.6L1153.4 533.3H1150.2Z"/></g>
<path d="M1156.5 531.1999999999999L1160.5 532.1999999999999H1162.8" fill="none" stroke="#fff" stroke-width="0.8"/><rect x="1153" y="552.3" width="5" height="4.9" fill="#16bbe0"/><rect x="1153" y="559.1999999999999" width="5" height="4.9" fill="#16bbe0"/><rect x="1159.9" y="552.3" width="5" height="4.9" fill="#16bbe0"/><rect x="1159.9" y="559.1999999999999" width="5" height="4.9" fill="#16bbe0"/><path d="M623.08 188.30L633.77 208.63L632.18 209.44L621.92 188.90Z" fill="#7b68ee" opacity="0.6"/><path d="M633.59 208.29L649.54 238.61L647.31 239.76L632.01 209.11Z" fill="#7b68ee" opacity="0.8"/><path d="M649.37 238.28L710.88 355.22L706.16 357.65L647.14 239.42Z" fill="#7b68ee" opacity="1"/><path d="M715.9 370.4L700.7 359.8L715.9 352.4Z" fill="#7b68ee"/></svg>
</body></html>
